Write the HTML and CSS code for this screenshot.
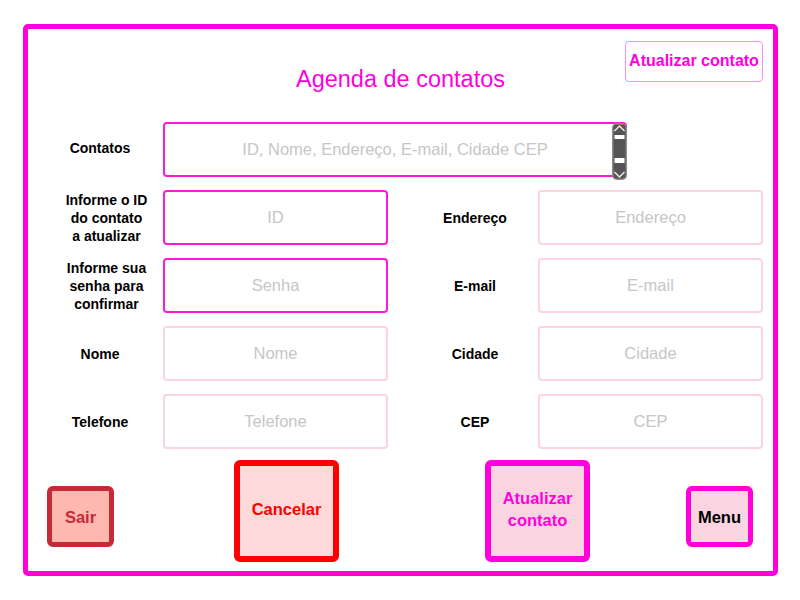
FILE: index.html
```html
<!DOCTYPE html>
<html lang="pt">
<head>
<meta charset="utf-8">
<title>Agenda de contatos</title>
<link rel="stylesheet" href="styles.css">
</head>
<body>
<div class="frame">
  <header class="head">
    <h1 class="title">Agenda de contatos</h1>
    <button class="top-btn">Atualizar contato</button>
  </header>

  <div class="form">
    <div class="lbl first">Contatos</div>
    <div class="list first">
      <span class="ph">ID, Nome, Endereço, E-mail, Cidade CEP</span>
      <svg class="scroll" width="15" height="57" viewBox="0 0 15 57">
        <rect x="0.75" y="0.75" width="13.5" height="55.5" rx="4" fill="#555555" stroke="#8a8a8a" stroke-width="1.5"/>
        <path d="M2.5 8 L7.5 3 L12.5 8" fill="none" stroke="#e8e8e8" stroke-width="1.5"/>
        <path d="M2.5 49 L7.5 54 L12.5 49" fill="none" stroke="#e8e8e8" stroke-width="1.5"/>
        <rect x="2.5" y="12" width="10" height="4" fill="#ffffff"/>
        <rect x="2.5" y="35" width="10" height="5" fill="#ffffff"/>
      </svg>
    </div>

    <div class="lbl multi">Informe o ID<br>do contato<br>a atualizar</div>
    <div class="field strong">ID</div>
    <div class="lbl right">Endereço</div>
    <div class="field">Endereço</div>

    <div class="lbl multi">Informe sua<br>senha para<br>confirmar</div>
    <div class="field strong">Senha</div>
    <div class="lbl right">E-mail</div>
    <div class="field">E-mail</div>

    <div class="lbl">Nome</div>
    <div class="field">Nome</div>
    <div class="lbl right">Cidade</div>
    <div class="field">Cidade</div>

    <div class="lbl">Telefone</div>
    <div class="field">Telefone</div>
    <div class="lbl right">CEP</div>
    <div class="field">CEP</div>
  </div>

  <div class="actions">
    <button class="btn small sair">Sair</button>
    <button class="btn big cancelar">Cancelar</button>
    <button class="btn big atualizar">Atualizar<br>contato</button>
    <button class="btn small menu">Menu</button>
  </div>
</div>
</body>
</html>
```

FILE: styles.css
```css
* { box-sizing: border-box; }

body {
  margin: 0;
  background: #ffffff;
  font-family: "Liberation Sans", Arial, sans-serif;
}

.frame {
  width: 755px;
  height: 552px;
  margin: 24px 0 0 23px;
  border: 5px solid #ff00dd;
  border-radius: 5px;
}

.head {
  display: grid;
  grid-template-columns: 1fr auto 1fr;
  padding: 12px 10px 0 10px;
}

.title {
  grid-column: 2;
  margin: 24px 0 0 0;
  font-size: 23.5px;
  line-height: 28px;
  font-weight: normal;
  color: #ff00dd;
  text-align: center;
}

.top-btn {
  grid-column: 3;
  justify-self: end;
  align-self: start;
  width: 138px;
  height: 41px;
  padding: 0 0 2px 0;
  border: 1px solid #ff8cf0;
  border-radius: 4px;
  background: #ffffff;
  color: #ff00dd;
  font-family: "Liberation Sans", Arial, sans-serif;
  font-weight: bold;
  font-size: 16px;
}

.form {
  display: grid;
  grid-template-columns: 123px 225px 150px 225px;
  grid-auto-rows: 55px;
  row-gap: 13px;
  margin: 29px 0 0 12px;
}

.lbl {
  align-self: center;
  padding-right: 3px;
  font-weight: bold;
  font-size: 14px;
  line-height: 18px;
  color: #000;
  text-align: center;
}

.lbl.multi { padding-left: 13px; }
.lbl.right { padding: 0 0 0 24px; }
.lbl.first { margin-bottom: 4px; }

.list {
  grid-column: 2 / 5;
  width: 464px;
  height: 55px;
  margin-bottom: 2px;
  position: relative;
  display: flex;
  align-items: center;
  justify-content: center;
  border: 2px solid #ff1ad9;
  border-radius: 4px;
}

.scroll {
  position: absolute;
  right: -2px;
  top: -1px;
}

.ph,
.field {
  color: #c6c6c6;
  font-size: 16.5px;
}

.field {
  display: flex;
  align-items: center;
  justify-content: center;
  border: 2px solid #fbd3e2;
  border-radius: 4px;
}

.field.strong { border-color: #ff1ad9; }

.actions {
  display: flex;
  align-items: flex-start;
  margin-top: 11px;
  padding-left: 19px;
}

.btn {
  padding: 0;
  font-family: "Liberation Sans", Arial, sans-serif;
  font-weight: bold;
  font-size: 16.5px;
  line-height: 22px;
  border-radius: 6px;
}

.btn.small {
  width: 67px;
  height: 61px;
  margin-top: 26px;
  border-width: 5px;
  border-style: solid;
}

.btn.big {
  width: 105px;
  height: 102px;
  padding-bottom: 4px;
  border-width: 6px;
  border-style: solid;
}

.sair {
  border-color: #c62a36;
  background: #ffb8b0;
  color: #c62a36;
}

.cancelar {
  margin-left: 120px;
  border-color: #ff0000;
  background: #fdd9d9;
  color: #ff0000;
}

.atualizar {
  margin-left: 146px;
  border-color: #ff00dd;
  background: #fad4e0;
  color: #ff00dd;
}

.menu {
  margin-left: 96px;
  border-color: #ff00dd;
  background: #fad4e0;
  color: #000;
}
```
